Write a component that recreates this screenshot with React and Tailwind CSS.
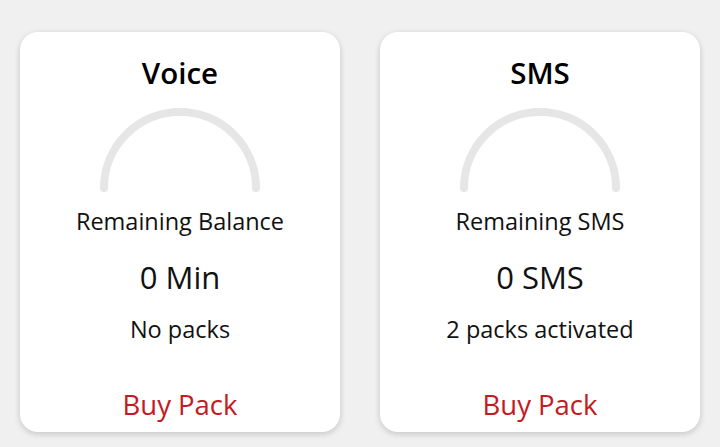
import React from "react";

function Gauge() {
  return (
    <svg width="168" height="88" viewBox="0 0 168 88" className="block">
      <path d="M8 80 A76 76 0 0 1 160 80" fill="none" stroke="#e6e6e6" strokeWidth="8" strokeLinecap="round" />
    </svg>
  );
}

function Card({ title, label, value, packs }) {
  return (
    <div className="w-[320px] h-[400px] rounded-[18px] bg-white shadow-[0_2px_6px_rgba(0,0,0,0.18)] flex flex-col items-center">
      <div className="shrink-0 h-[80px] flex items-center justify-center text-[29.5px] font-semibold text-black leading-none pt-[1px]">{title}</div>
      <div className="shrink-0 mt-[-4px]">
        <Gauge />
      </div>
      <div className="shrink-0 h-[36px] mt-[8px] flex items-center text-[23.5px] text-[#111] leading-none">{label}</div>
      <div className="shrink-0 h-[44px] mt-[15px] flex items-center text-[31px] text-[#111] leading-none">{value}</div>
      <div className="shrink-0 h-[30px] mt-[16px] flex items-center text-[23.5px] text-[#111] leading-none">{packs}</div>
      <div className="shrink-0 h-[36px] mt-[42px] flex items-center text-[27.5px] text-[#c41a22] leading-none">Buy Pack</div>
    </div>
  );
}

export default function App() {
  return (
    <div className="w-[720px] h-[447px] bg-[#f0f0f0] flex gap-[40px] pl-[20px] pt-[32px] font-['Open_Sans',sans-serif]">
      <Card title="Voice" label="Remaining Balance" value="0 Min" packs="No packs" />
      <Card title="SMS" label="Remaining SMS" value="0 SMS" packs="2 packs activated" />
    </div>
  );
}
